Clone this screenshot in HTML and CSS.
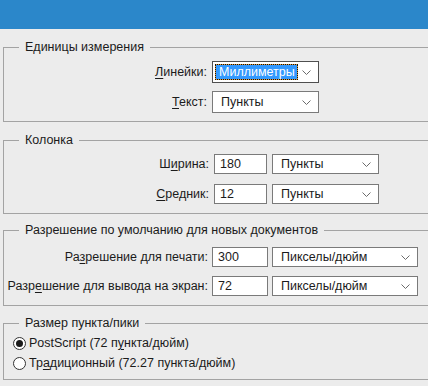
FILE: index.html
```html
<!DOCTYPE html>
<html lang="ru">
<head>
    <meta charset="UTF-8">
    <meta name="viewport" content="width=device-width, initial-scale=1.0">
    <title>Единицы измерения</title>
    <link rel="stylesheet" href="styles.css">
</head>
<body>
    <div class="titlebar"></div>
    <div class="panel">
        <fieldset class="group group-units">
            <legend>Единицы измерения</legend>
            <div class="rows cols-units">
                <label class="label"><u>Л</u>инейки:</label>
                <div class="select tall focused">
                    <span class="hl">Миллиметры</span>
                    <svg class="chev" width="9" height="5" viewBox="0 0 9 5"><polyline points="0.5,0.5 4.5,4.5 8.5,0.5" fill="none" stroke="#6b6b6b" stroke-width="1"/></svg>
                </div>
                <label class="label"><u>Т</u>екст:</label>
                <div class="select tall">
                    <span class="val">Пункты</span>
                    <svg class="chev" width="9" height="5" viewBox="0 0 9 5"><polyline points="0.5,0.5 4.5,4.5 8.5,0.5" fill="none" stroke="#6b6b6b" stroke-width="1"/></svg>
                </div>
            </div>
        </fieldset>

        <fieldset class="group group-column">
            <legend>Колонка</legend>
            <div class="rows cols-column">
                <label class="label">Ш<u>и</u>рина:</label>
                <div class="input">180</div>
                <div class="select">
                    <span class="val">Пункты</span>
                    <svg class="chev" width="9" height="5" viewBox="0 0 9 5"><polyline points="0.5,0.5 4.5,4.5 8.5,0.5" fill="none" stroke="#6b6b6b" stroke-width="1"/></svg>
                </div>
                <label class="label"><u>С</u>редник:</label>
                <div class="input">12</div>
                <div class="select">
                    <span class="val">Пункты</span>
                    <svg class="chev" width="9" height="5" viewBox="0 0 9 5"><polyline points="0.5,0.5 4.5,4.5 8.5,0.5" fill="none" stroke="#6b6b6b" stroke-width="1"/></svg>
                </div>
            </div>
        </fieldset>

        <fieldset class="group group-res">
            <legend>Разрешение по умолчанию для новых документов</legend>
            <div class="rows cols-res">
                <label class="label">Ра<u>з</u>решение для печати:</label>
                <div class="input">300</div>
                <div class="select">
                    <span class="val">Пикселы/дюйм</span>
                    <svg class="chev" width="9" height="5" viewBox="0 0 9 5"><polyline points="0.5,0.5 4.5,4.5 8.5,0.5" fill="none" stroke="#6b6b6b" stroke-width="1"/></svg>
                </div>
                <label class="label">Разр<u>е</u>шение для вывода на экран:</label>
                <div class="input">72</div>
                <div class="select">
                    <span class="val">Пикселы/дюйм</span>
                    <svg class="chev" width="9" height="5" viewBox="0 0 9 5"><polyline points="0.5,0.5 4.5,4.5 8.5,0.5" fill="none" stroke="#6b6b6b" stroke-width="1"/></svg>
                </div>
            </div>
        </fieldset>

        <fieldset class="group group-size">
            <legend>Размер пункта/пики</legend>
            <div class="radio-row">
                <span class="radio checked"></span>
                <span>PostScript (72 п<u>у</u>нкта/дюйм)</span>
            </div>
            <div class="radio-row">
                <span class="radio"></span>
                <span>Тр<u>а</u>диционный (72.27 пункта/дюйм)</span>
            </div>
        </fieldset>
    </div>
</body>
</html>
```

FILE: styles.css
```css
body {
    margin: 0;
    background-color: #ececec;
    font-family: "Liberation Sans", Arial, sans-serif;
    font-size: 12.5px;
    color: #1b1b1b;
    overflow: hidden;
}
.titlebar {
    height: 29px;
    background-color: #2b87ca;
}
.panel {
    padding-left: 3px;
}
.group {
    margin: 0;
    padding: 0;
    border: 1px solid #a3a3a3;
    border-right: none;
    min-width: 0;
}
.group legend {
    margin-left: 15px;
    padding: 0 6px;
    line-height: 16px;
}
.group-units {
    margin-top: 10px;
    padding: 6px 0 8px 0;
}
.group-column {
    margin-top: 10px;
    padding: 6px 0 9px 0;
}
.group-res {
    margin-top: 8px;
    padding: 9px 0 9px 0;
}
.group-size {
    margin-top: 9px;
    padding: 2px 0 6px 0;
}
.rows {
    display: grid;
    align-items: center;
}
.cols-units {
    grid-template-columns: 203px 107px;
    column-gap: 5px;
    row-gap: 8px;
}
.cols-column {
    grid-template-columns: 205px 53px 107px;
    column-gap: 5px;
    row-gap: 10px;
}
.cols-res {
    grid-template-columns: 204px 56px 146px;
    column-gap: 4px;
    row-gap: 9px;
}
.label {
    text-align: right;
    white-space: nowrap;
}
.label u, .radio-row u {
    text-decoration-thickness: 1px;
    text-underline-offset: 2px;
}
.input, .select {
    box-sizing: border-box;
    height: 20px;
    background-color: #fff;
    border: 1px solid #7a7a7a;
    display: flex;
    align-items: center;
}
.input {
    padding-left: 5px;
}
.select {
    justify-content: space-between;
    padding: 0 7px 0 8px;
}
.select.tall {
    height: 22px;
}
.select.focused {
    border-color: #4f4f4f;
    padding-left: 2px;
}
.hl {
    box-sizing: border-box;
    height: 16px;
    width: 83px;
    padding-left: 3px;
    line-height: 14px;
    white-space: nowrap;
    overflow: hidden;
    color: #fff;
    border: 1px dotted #111;
    background: linear-gradient(#3399ff, #3399ff) padding-box, #e09a3a border-box;
}
.chev {
    display: block;
    margin-top: 1px;
}
.radio-row {
    height: 20px;
    display: flex;
    align-items: center;
    gap: 3px;
    padding-left: 9px;
}
.radio {
    box-sizing: border-box;
    width: 13px;
    height: 13px;
    border: 1px solid #333;
    border-radius: 50%;
    background-color: #fff;
    display: flex;
    align-items: center;
    justify-content: center;
}
.radio.checked::after {
    content: "";
    width: 7px;
    height: 7px;
    border-radius: 50%;
    background-color: #1b1b1b;
}
```
